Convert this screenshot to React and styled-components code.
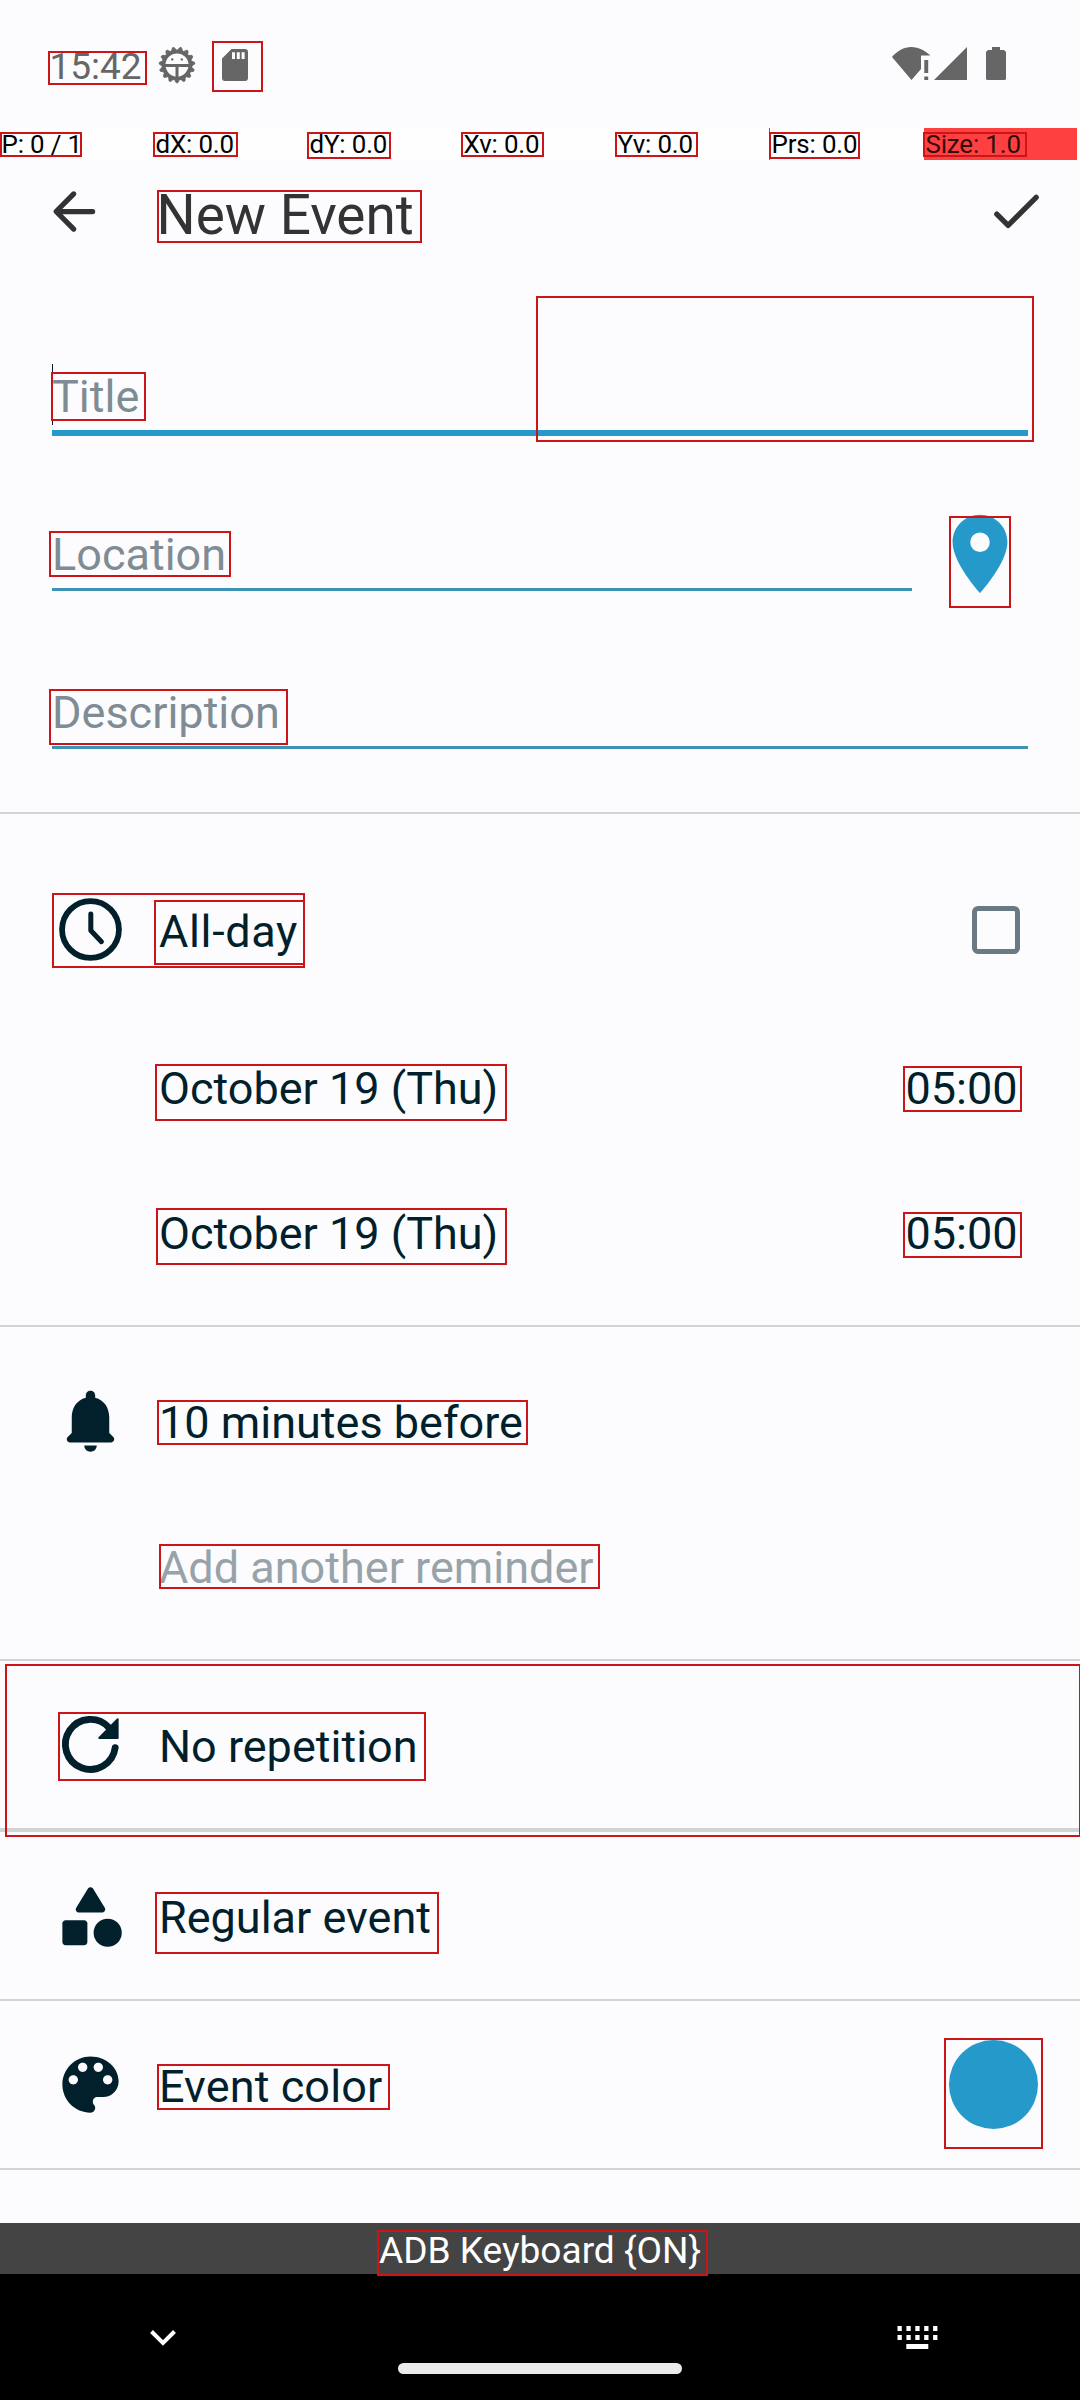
import React from "react";
import styled, { createGlobalStyle } from "styled-components";

const ink = "#021f2c";
const accent = "#2499ca";
const statusGrey = "#666666";

const Global = createGlobalStyle`
  body { margin: 0; background: #fcfcfe; }
  * { box-sizing: border-box; }
`;

const Screen = styled.div`
  position: relative;
  width: 1080px;
  height: 2400px;
  overflow: hidden;
  display: flex;
  flex-direction: column;
  background: #fcfcfe;
  color: ${ink};
  font-family: Roboto, "Liberation Sans", sans-serif;
  font-size: 45px;
  white-space: nowrap;
`;

const StatusBar = styled.header`
  height: 128px;
  flex: none;
  display: flex;
  align-items: flex-start;
  padding: 46px 74px 0 49.5px;
  color: ${statusGrey};
`;
const Clock = styled.span`
  width: 108.5px;
  font-size: 37px;
  line-height: 41px;
`;
const StatusIcon = styled.svg`
  display: block;
  flex: none;
  width: ${(p) => p.$w}px;
  height: ${(p) => p.$h}px;
  margin-left: ${(p) => p.$gap || 0}px;
  margin-top: ${(p) => p.$top || 0}px;
`;
const Spacer = styled.div`
  flex: 1;
`;

const PointerBar = styled.div`
  height: 32px;
  flex: none;
  display: grid;
  grid-template-columns: repeat(7, 153px);
  column-gap: 1px;
  background: #fefefe;
  color: #000;
  font-size: 25.9px;
  letter-spacing: -0.15px;
  line-height: 32px;
`;
const PointerCell = styled.div`
  padding-left: 1.5px;
  background: ${(p) => (p.$hot ? "#ff4040" : "transparent")};
  color: ${(p) => (p.$hot ? "#330b0d" : "#000")};
  box-shadow: ${(p) => (p.$edge ? "-1px 0 0 #a94a4e" : "none")};
`;

const Toolbar = styled.div`
  height: 104px;
  flex: none;
  display: flex;
  align-items: center;
  padding: 0 32px 2px 43px;
  color: #333333;
`;
const Heading = styled.h1`
  margin: 0 auto 0 50.5px;
  padding-top: 8px;
  font-size: 54.9px;
  font-weight: 400;
  line-height: 64px;
`;
const ActionIcon = styled.svg`
  width: 63px;
  height: 63px;
  display: block;
`;

const Fields = styled.section`
  height: 548px;
  flex: none;
  display: flex;
  flex-direction: column;
  padding: 100px 52px 0;
`;
const FieldRow = styled.div`
  display: flex;
  flex: none;
  height: ${(p) => p.$h}px;
  align-items: flex-start;
`;
const Field = styled.div`
  width: ${(p) => p.$w}px;
  height: ${(p) => p.$h}px;
  display: flex;
  align-items: flex-start;
  border-bottom: ${(p) => (p.$focused ? 6 : 3)}px solid ${(p) => (p.$focused ? accent : "#3c93b3")};
  color: #7f8c94;
`;
const Hint = styled.span`
  padding-top: ${(p) => p.$top}px;
  margin-left: ${(p) => p.$shift || 0}px;
  line-height: 61px;
`;
const Caret = styled.i`
  width: 1px;
  height: 61px;
  background: ${ink};
`;
const PinIcon = styled.svg`
  width: 94px;
  height: 94px;
  margin: 11px 0 0 21px;
  color: ${accent};
`;

const Divider = styled.div`
  height: ${(p) => p.$h || 2}px;
  flex: none;
  background: #d2d3d6;
`;
const Section = styled.section`
  flex: none;
  padding: ${(p) => p.$pad || "0"};
`;
const Row = styled.div`
  height: ${(p) => p.$h}px;
  flex: none;
  display: flex;
  align-items: center;
  padding-left: 52.5px;
  padding-right: ${(p) => p.$right || 0}px;
`;
const IconCell = styled.div`
  width: 106.5px;
  height: 75px;
  flex: none;
`;
const RowIcon = styled.svg`
  display: block;
  width: 75px;
  height: 75px;
`;
const Label = styled.span`
  flex: 1;
  padding-top: 5px;
  line-height: 54px;
  letter-spacing: ${(p) => p.$track || 0}px;
  color: ${(p) => (p.$muted ? "#98a3a9" : ink)};
`;
const Time = styled.span`
  padding-top: 5px;
  line-height: 54px;
`;
const Checkbox = styled.div`
  width: 48px;
  height: 48px;
  border: 5px solid #6a7a82;
  border-radius: 6px;
`;
const Swatch = styled.div`
  width: 89px;
  height: 89px;
  border-radius: 50%;
  background: ${accent};
`;

const KeyboardBar = styled.div`
  height: 51px;
  flex: none;
  margin-top: 53px;
  background: #444444;
  color: #fff;
  text-align: center;
  font-size: 37.1px;
  line-height: 55px;
`;
const NavBar = styled.nav`
  flex: 1;
  display: grid;
  grid-template-columns: 398px 284px 1fr;
  background: #000;
  color: #fff;
`;
const NavIcon = styled.svg`
  width: ${(p) => p.$w}px;
  height: ${(p) => p.$h}px;
  margin: ${(p) => p.$m};
`;
const HomePill = styled.div`
  height: 11px;
  margin-top: 89px;
  border-radius: 5.5px;
  background: #ebebeb;
`;

const MarkLayer = styled.div`
  position: absolute;
  inset: 0;
  pointer-events: none;
`;
const Mark = styled.div`
  position: absolute;
  left: ${(p) => p.$b[0]}px;
  top: ${(p) => p.$b[1]}px;
  width: ${(p) => p.$b[2] - p.$b[0]}px;
  height: ${(p) => p.$b[3] - p.$b[1]}px;
  border: 2px solid #cc1518;
`;

// left, top, right, bottom of every highlighted element
const marks = [
  [48, 51, 147, 85], [212, 41, 263, 92],
  [0, 132, 82, 157], [153, 132, 238, 157], [307, 132, 391, 159], [461, 132, 544, 157],
  [615, 132, 698, 157], [769, 132, 860, 159], [923, 132, 1027, 157],
  [157, 190, 422, 243], [536, 296, 1034, 442], [51, 372, 146, 421],
  [49, 531, 231, 577], [949, 516, 1011, 608], [49, 689, 288, 745],
  [52, 893, 305, 968], [154, 900, 305, 965],
  [155, 1064, 507, 1121], [903, 1066, 1022, 1112],
  [156, 1208, 507, 1265], [903, 1212, 1022, 1258],
  [157, 1400, 528, 1445], [159, 1544, 600, 1589],
  [5, 1664, 1081, 1837], [58, 1712, 426, 1781],
  [155, 1892, 439, 1954], [157, 2064, 390, 2110], [944, 2038, 1043, 2149],
  [377, 2230, 708, 2276],
];

const pointerCells = ["P: 0 / 1", "dX: 0.0", "dY: 0.0", "Xv: 0.0", "Yv: 0.0", "Prs: 0.0", "Size: 1.0"];
const teeth = Array.from({ length: 15 }, (_, i) => 180 + i * 24);

const Gear = () => (
  <StatusIcon $w={38} $h={38} viewBox="-19 -19 38 38">
    <circle r="13.4" fill="none" stroke="currentColor" strokeWidth="3.8" />
    {teeth.map((a) => (
      <path key={a} d="M-2.6-14.500L-0.8-17.800H0.8L2.6-14.500Z" fill="currentColor" stroke="currentColor" strokeWidth=".8" strokeLinejoin="round" transform={`rotate(${a})`} />
    ))}
    <path d="M-12 0.5H12M0 1V13" stroke="currentColor" strokeWidth="3" fill="none" />
    <circle cx="-4.8" cy="-5.600" r="1.2" fill="currentColor" />
    <circle cx="4.8" cy="-5.600" r="1.2" fill="currentColor" />
  </StatusIcon>
);

export default function App() {
  return (
    <Screen>
      <Global />
      <StatusBar>
        <Clock>15:42</Clock>
        <Gear />
        <StatusIcon $w={26} $h={32} $gap={26} $top={3} viewBox="0 0 26 32">
          <path fill="currentColor" fillRule="evenodd" d="M9.5 0H23a3 3 0 0 1 3 3V29a3 3 0 0 1-3 3H3a3 3 0 0 1-3-3V9.5ZM10 3.3V10H13V3.3ZM14.8 3.3V10H17.8V3.3ZM19.6 3.3V10H22.6V3.3Z" />
        </StatusIcon>
        <Spacer />
        <StatusIcon $w={39} $h={34} viewBox="0 0 39 34">
          <path fill="currentColor" d="M0 11C5 5 12 1 19.3 1S33.500 5 38.300 9.500H29V23L19.500 34Z" />
          <path fill="currentColor" d="M32.300 14H36.200V27H32.300ZM32.300 30.500H36.200V34H32.300Z" />
        </StatusIcon>
        <StatusIcon $w={33} $h={33} $gap={3} $top={1} viewBox="0 0 33 33">
          <path fill="currentColor" d="M33 0V33H0Z" />
        </StatusIcon>
        <StatusIcon $w={20} $h={33} $gap={19} $top={1} viewBox="0 0 20 33">
          <path fill="currentColor" d="M6 0H14V3H18L20 5V32L19 33H1L0 32V5L2 3H6Z" />
        </StatusIcon>
      </StatusBar>

      <PointerBar>
        {pointerCells.map((t, i) => (
          <PointerCell key={t} $hot={i === 6} $edge={i === 5}>{t}</PointerCell>
        ))}
      </PointerBar>

      <Toolbar>
        <ActionIcon viewBox="0 0 24 24" fill="none" stroke="currentColor" strokeWidth="2" strokeLinecap="round" strokeLinejoin="round">
          <path d="M18.900 12H5.300M11.700 5.300L5 12L11.700 18.700" />
        </ActionIcon>
        <Heading>New Event</Heading>
        <ActionIcon viewBox="0 0 24 24" fill="none" stroke="currentColor" strokeWidth="2" strokeLinecap="round" strokeLinejoin="round">
          <path d="M4.500 13L8.800 17.300L19.500 6.600" />
        </ActionIcon>
      </Toolbar>

      <Fields>
        <FieldRow $h={132}>
          <Field $w={976} $h={72} $focused>
            <Caret />
            <Hint $top={2} $shift={-1}>Title</Hint>
          </Field>
        </FieldRow>
        <FieldRow $h={158}>
          <Field $w={860} $h={95}>
            <Hint $top={28}>Location</Hint>
          </Field>
          <PinIcon viewBox="0 0 24 24" fill="currentColor">
            <path fillRule="evenodd" d="M12 2C8.130 2 5 5.130 5 9c0 5.250 7 13 7 13s7-7.750 7-13c0-3.870-3.130-7-7-7zm0 9.500a2.500 2.500 0 1 1 0-5 2.500 2.500 0 0 1 0 5z" />
          </PinIcon>
        </FieldRow>
        <FieldRow $h={158}>
          <Field $w={976} $h={95}>
            <Hint $top={28}>Description</Hint>
          </Field>
        </FieldRow>
      </Fields>
      <Divider />

      <Section $pad="31px 0 21px">
        <Row $h={169} $right={60}>
          <IconCell>
            <RowIcon viewBox="0 0 24 24" fill="none" stroke="currentColor">
              <circle cx="12" cy="12" r="9.1" strokeWidth="1.85" />
              <path d="M12.100 7V12.300L15.500 15.900" strokeWidth="1.6" strokeLinecap="round" strokeLinejoin="round" />
            </RowIcon>
          </IconCell>
          <Label $track={0.65}>All-day</Label>
          <Checkbox />
        </Row>
        <Row $h={145} $right={62.5}>
          <IconCell />
          <Label>October 19 (Thu)</Label>
          <Time>05:00</Time>
        </Row>
        <Row $h={145} $right={62.5}>
          <IconCell />
          <Label>October 19 (Thu)</Label>
          <Time>05:00</Time>
        </Row>
      </Section>
      <Divider />

      <Section $pad="21px 0">
        <Row $h={145}>
          <IconCell>
            <RowIcon viewBox="0 0 24 24" fill="currentColor">
              <path d="M12 22c1.100 0 2-.9 2-2h-4c0 1.100.89 2 2 2zm6-6v-5c0-3.070-1.640-5.640-4.500-6.320V4c0-.83-.67-1.500-1.500-1.500s-1.500.67-1.500 1.500v.68C7.630 5.360 6 7.920 6 11v5l-1.290 1.290c-.63.63-.19 1.710.7 1.710h13.170c.89 0 1.340-1.080.71-1.710L18 16z" />
            </RowIcon>
          </IconCell>
          <Label>10 minutes before</Label>
        </Row>
        <Row $h={145}>
          <IconCell />
          <Label $muted>Add another reminder</Label>
        </Row>
      </Section>
      <Divider />

      <Row $h={167}>
        <IconCell>
          <RowIcon viewBox="0 0 24 24" fill="none" stroke="currentColor">
            <path d="M19.900 13A8 8 0 1 1 17.900 6.600" strokeWidth="2.2" strokeLinecap="round" />
            <path d="M20.700 3.900V9.900H14.800Z" fill="currentColor" strokeWidth=".6" strokeLinejoin="round" />
          </RowIcon>
        </IconCell>
        <Label>No repetition</Label>
      </Row>
      <Divider $h={4} />

      <Row $h={167}>
        <IconCell>
          <RowIcon viewBox="0 0 24 24" fill="currentColor">
            <path d="M11.150 3.400L7.430 9.480c-.41.66.07 1.520.85 1.520h7.430c.78 0 1.260-.86.85-1.520L12.850 3.400c-.39-.64-1.310-.64-1.700 0z" />
            <circle cx="17.500" cy="17.500" r="4.500" />
            <path d="M4 21.500h6c.55 0 1-.45 1-1v-6c0-.55-.45-1-1-1H4c-.55 0-1 .45-1 1v6c0 .55.45 1 1 1z" />
          </RowIcon>
        </IconCell>
        <Label>Regular event</Label>
      </Row>
      <Divider />

      <Row $h={167} $right={42}>
        <IconCell>
          <RowIcon viewBox="0 0 24 24" fill="currentColor">
            <path d="M12 3c-4.970 0-9 4.030-9 9s4.030 9 9 9c.83 0 1.500-.67 1.500-1.500 0-.39-.15-.74-.39-1.010-.23-.26-.38-.61-.38-.99 0-.83.67-1.500 1.500-1.500H16c2.760 0 5-2.240 5-5 0-4.420-4.030-8-9-8zm-5.500 9c-.83 0-1.500-.67-1.500-1.500S5.670 9 6.500 9 8 9.670 8 10.500 7.330 12 6.500 12zm3-4C8.670 8 8 7.330 8 6.500S8.670 5 9.500 5s1.500.67 1.500 1.500S10.330 8 9.500 8zm5 0c-.83 0-1.500-.67-1.500-1.500S13.670 5 14.500 5s1.500.67 1.500 1.500S15.330 8 14.500 8zm3 4c-.83 0-1.500-.67-1.500-1.500S16.670 9 17.500 9s1.500.67 1.500 1.500-.67 1.500-1.500 1.500z" />
          </RowIcon>
        </IconCell>
        <Label $track={0.1}>Event color</Label>
        <Swatch />
      </Row>
      <Divider />

      <KeyboardBar>ADB Keyboard {"{ON}"}</KeyboardBar>
      <NavBar>
        <NavIcon $w={26} $h={16} $m="56px 0 0 150px" viewBox="0 0 26 16" fill="none" stroke="currentColor" strokeWidth="4">
          <path d="M1.500 1.500L13 13L24.500 1.500" />
        </NavIcon>
        <HomePill />
        <NavIcon $w={41} $h={23} $m="52px 0 0 215px" viewBox="0 0 41 23" fill="currentColor">
          {[0, 1, 2, 3, 4].map((c) => (
            <path key={c} d={`M${0.5 + c * 8.9} 0h4.300v5h-4.300zM${0.5 + c * 8.9} 9h4.300v5h-4.300z`} />
          ))}
          <path d="M9.300 18h22v5h-22z" />
        </NavIcon>
      </NavBar>

      <MarkLayer>
        {marks.map((b, i) => <Mark key={i} $b={b} />)}
      </MarkLayer>
    </Screen>
  );
}
